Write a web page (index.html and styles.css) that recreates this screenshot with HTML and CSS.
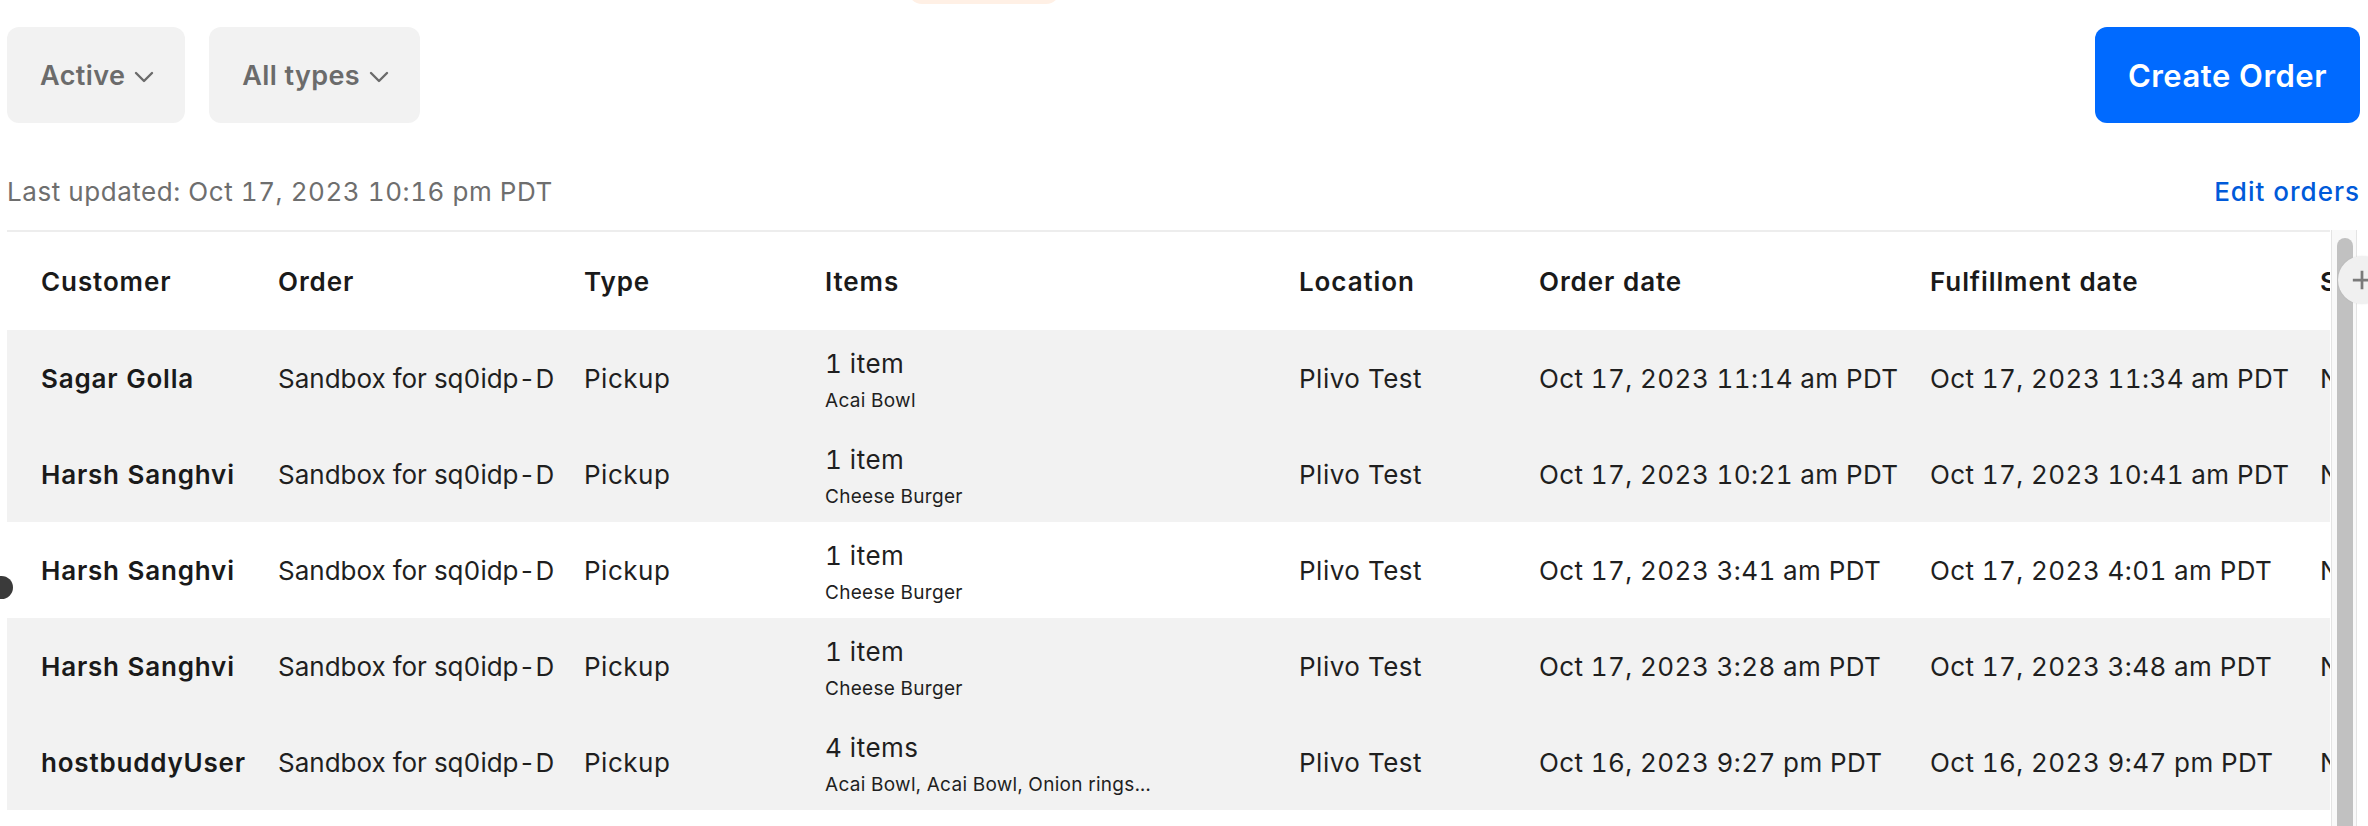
FILE: index.html
```html
<!DOCTYPE html>
<html lang="en">
<head>
<meta charset="utf-8">
<title>Orders</title>
<link rel="stylesheet" href="styles.css">
</head>
<body>
<div class="peach"></div>
<div class="page">
  <div class="toolbar">
    <div class="filters">
      <button class="filter">Active
        <svg class="chev" viewBox="0 0 20 12" width="20" height="12"><polyline points="2,2 10,10 18,2" fill="none" stroke="#6b6b6b" stroke-width="2.4" stroke-linecap="round" stroke-linejoin="round"/></svg>
      </button>
      <button class="filter">All types
        <svg class="chev" viewBox="0 0 20 12" width="20" height="12"><polyline points="2,2 10,10 18,2" fill="none" stroke="#6b6b6b" stroke-width="2.4" stroke-linecap="round" stroke-linejoin="round"/></svg>
      </button>
    </div>
    <button class="create">Create Order</button>
  </div>
  <div class="info">
    <span class="updated">Last updated: Oct 17, 2023 10:16 pm PDT</span>
    <a class="edit" href="#">Edit orders</a>
  </div>
  <div class="table-area">
    <div class="left-dot"></div>
    <div class="table-clip">
      <table class="orders">
        <colgroup>
          <col class="c1"><col class="c2"><col class="c3"><col class="c4"><col class="c5"><col class="c6"><col class="c7"><col class="c8">
        </colgroup>
        <thead>
          <tr>
            <th class="first">Customer</th><th>Order</th><th>Type</th><th>Items</th><th>Location</th><th>Order date</th><th>Fulfillment date</th><th>Status</th>
          </tr>
        </thead>
        <tbody>
          <tr class="shaded">
            <td class="first name">Sagar Golla</td><td class="plain">Sandbox for sq0idp-D</td><td>Pickup</td>
            <td><div class="count">1 item</div><div class="list">Acai Bowl</div></td>
            <td>Plivo Test</td><td class="date">Oct 17, 2023 11:14 am PDT</td><td class="date">Oct 17, 2023 11:34 am PDT</td><td>New</td>
          </tr>
          <tr class="shaded">
            <td class="first name">Harsh Sanghvi</td><td class="plain">Sandbox for sq0idp-D</td><td>Pickup</td>
            <td><div class="count">1 item</div><div class="list">Cheese Burger</div></td>
            <td>Plivo Test</td><td class="date">Oct 17, 2023 10:21 am PDT</td><td class="date">Oct 17, 2023 10:41 am PDT</td><td>New</td>
          </tr>
          <tr>
            <td class="first name">Harsh Sanghvi</td><td class="plain">Sandbox for sq0idp-D</td><td>Pickup</td>
            <td><div class="count">1 item</div><div class="list">Cheese Burger</div></td>
            <td>Plivo Test</td><td class="date">Oct 17, 2023 3:41 am PDT</td><td class="date">Oct 17, 2023 4:01 am PDT</td><td>New</td>
          </tr>
          <tr class="shaded">
            <td class="first name">Harsh Sanghvi</td><td class="plain">Sandbox for sq0idp-D</td><td>Pickup</td>
            <td><div class="count">1 item</div><div class="list">Cheese Burger</div></td>
            <td>Plivo Test</td><td class="date">Oct 17, 2023 3:28 am PDT</td><td class="date">Oct 17, 2023 3:48 am PDT</td><td>New</td>
          </tr>
          <tr class="shaded">
            <td class="first name">hostbuddyUser</td><td class="plain">Sandbox for sq0idp-D</td><td>Pickup</td>
            <td><div class="count">4 items</div><div class="list">Acai Bowl, Acai Bowl, Onion rings...</div></td>
            <td>Plivo Test</td><td class="date">Oct 16, 2023 9:27 pm PDT</td><td class="date">Oct 16, 2023 9:47 pm PDT</td><td>New</td>
          </tr>
        </tbody>
      </table>
    </div>
    <div class="vscroll"><div class="thumb"></div></div>
    <div class="add-col">
      <svg viewBox="0 0 24 24" width="22" height="22"><path d="M12 2v20M2 12h20" stroke="#7a7a7a" stroke-width="3" fill="none"/></svg>
    </div>
  </div>
</div>
</body>
</html>
```

FILE: styles.css
```css
html, body {
  margin: 0;
  padding: 0;
  overflow: hidden;
  background: #ffffff;
}
body {
  font-family: Inter, "Noto Sans", "Liberation Sans", sans-serif;
  color: #1a1a1a;
  width: 2368px;
  height: 826px;
  position: relative;
  font-variant-numeric: tabular-nums;
}
.peach {
  position: absolute;
  left: 908px;
  top: -12px;
  width: 152px;
  height: 16px;
  background: #fff0e5;
  border-radius: 0 0 14px 14px;
}
.page {
  padding: 27px 8px 0 7px;
}
.toolbar {
  display: flex;
  justify-content: space-between;
  align-items: center;
  height: 96px;
}
.filters {
  display: flex;
  gap: 24px;
  height: 100%;
}
.filter {
  display: flex;
  align-items: center;
  gap: 9px;
  height: 96px;
  padding: 0 31px 0 33px;
  border: none;
  border-radius: 12px;
  background: #f2f2f2;
  color: #6b6b6b;
  font-family: inherit;
  font-size: 27px;
  font-weight: 600;
  letter-spacing: 0.4px;
}
.chev {
  display: block;
  margin-top: 4px;
}
.create {
  height: 96px;
  padding: 0 33px;
  border: none;
  border-radius: 12px;
  background: #006aff;
  color: #ffffff;
  font-family: inherit;
  font-size: 31px;
  font-weight: 600;
  letter-spacing: 0.5px;
}
.info {
  display: flex;
  justify-content: space-between;
  align-items: center;
  padding: 52px 0 21px;
  height: 34px;
  line-height: 34px;
}
.updated {
  font-size: 26px;
  color: #6e6e6e;
  letter-spacing: 0.55px;
}
.edit {
  font-size: 26px;
  font-weight: 500;
  color: #005ad9;
  text-decoration: none;
  letter-spacing: 1px;
}
.table-area {
  position: relative;
  display: flex;
  margin-right: -8px;
}
.table-clip {
  width: 2323px;
  overflow: hidden;
  border-top: 2px solid #ededed;
}
.orders {
  table-layout: fixed;
  border-collapse: collapse;
  width: 2513px;
  font-size: 26px;
  letter-spacing: 0.5px;
}
.c1 { width: 271px; }
.c2 { width: 306px; }
.c3 { width: 241px; }
.c4 { width: 474px; }
.c5 { width: 240px; }
.c6 { width: 391px; }
.c7 { width: 390px; }
.c8 { width: 200px; }
.orders th {
  height: 98px;
  padding: 0;
  text-align: left;
  font-weight: 600;
  color: #1a1a1a;
  white-space: nowrap;
  letter-spacing: 0.9px;
}
.orders td {
  height: 96px;
  padding: 0;
  color: #1f1f1f;
  white-space: nowrap;
  vertical-align: middle;
}
.orders .first {
  padding-left: 34px;
}
.orders td.name {
  font-weight: 600;
  color: #1a1a1a;
  letter-spacing: 0.8px;
}
.orders td.plain {
  letter-spacing: 0;
}
.orders td.date {
  letter-spacing: 0.4px;
}
.shaded td {
  background: #f2f2f2;
}
.count {
  font-size: 26px;
  line-height: 32px;
  padding-top: 5px;
}
.list {
  font-size: 19px;
  line-height: 26px;
  margin-top: 8px;
  letter-spacing: 0.3px;
}
.vscroll {
  width: 26px;
  margin-left: 1px;
  height: 600px;
  border-left: 1px solid #e4e4e4;
  border-right: 1px solid #e4e4e4;
  background: #f9f9f9;
  padding-top: 8px;
  box-sizing: border-box;
}
.thumb {
  width: 16px;
  margin-left: 5px;
  height: 700px;
  background: #c1c1c1;
  border-radius: 8px;
}
.add-col {
  position: absolute;
  left: 2331px;
  top: 26px;
  width: 48px;
  height: 48px;
  border-radius: 50%;
  background: #f0f0f0;
  box-shadow: 0 0 2px rgba(0,0,0,0.08);
  display: flex;
  align-items: center;
  justify-content: center;
}
.left-dot {
  position: absolute;
  left: -23px;
  top: 346px;
  width: 23px;
  height: 23px;
  border-radius: 50%;
  background: #3a3a3a;
  transform: translateX(6px);
}
```
